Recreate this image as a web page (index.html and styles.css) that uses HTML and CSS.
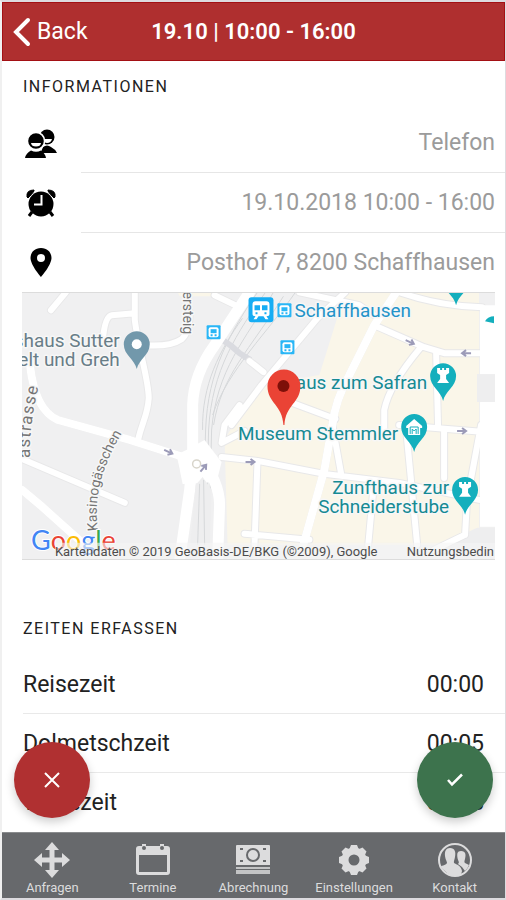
FILE: index.html
```html
<!DOCTYPE html>
<html lang="de">
<head>
    <meta charset="UTF-8">
    <meta name="viewport" content="width=device-width, initial-scale=1.0">
    <title>Termin 19.10</title>
    <link rel="stylesheet" href="styles.css">
</head>
<body>
    <div class="app">
        <header class="topbar">
            <button type="button" class="back">
                <svg width="18" height="30" viewBox="0 0 18 30" aria-hidden="true">
                    <path d="M15 3 L3 15 L15 27" fill="none" stroke="#fff" stroke-width="4" stroke-linecap="round"/>
                </svg>
                Back
            </button>
            <h1>19.10 | 10:00 - 16:00</h1>
        </header>

        <main>
            <div class="scroll">
                <section>
                    <h2>Informationen</h2>
                    <ul class="info">
                        <li>
                            <svg width="36" height="36" viewBox="0 0 36 36" aria-hidden="true">
                                <circle cx="24" cy="12" r="7.5"/>
                                <path d="M18 27 L20 22 Q24 19 28 22 Q32 24 34 28 H19z"/>
                                <path d="M20 14 H29 Q28 18 24 18 Q21 18 20 14z" fill="#fff"/>
                                <circle cx="13" cy="16" r="8.6" stroke="#fff" stroke-width="1.6"/>
                                <path d="M2 33 Q3 28 8 25.500 Q13 28 18 25.500 Q22 28 23 33z"/>
                                <path d="M8 18 H18 Q17.500 21.500 13 21.500 Q8.500 21.500 8 18z" fill="#fff"/>
                            </svg>
                            <span>Telefon</span>
                        </li>
                        <li>
                            <svg width="36" height="36" viewBox="0 0 36 36" aria-hidden="true">
                                <circle cx="18" cy="19" r="12.500"/>
                                <path d="M4 12 Q3 5 11 5 Q12 6 5 13z M32 12 Q33 5 25 5 Q24 6 31 13z" stroke="#000"/>
                                <path d="M9 27 L6 31 M27 27 L30 31" stroke="#000" stroke-width="3"/>
                                <path d="M18.500 10 V19.500 H11" fill="none" stroke="#fff" stroke-width="2"/>
                            </svg>
                            <span>19.10.2018 10:00 - 16:00</span>
                        </li>
                        <li>
                            <svg width="36" height="36" viewBox="0 0 36 36" aria-hidden="true">
                                <path fill-rule="evenodd" d="M18 3 C11 3 7.500 8 7.500 13 C7.500 20 18 32 18 32 C18 32 28.500 20 28.500 13 C28.500 8 25 3 18 3z M18 9 A4 4 0 1 1 18 17 A4 4 0 1 1 18 9z"/>
                            </svg>
                            <span>Posthof 7, 8200 Schaffhausen</span>
                        </li>
                    </ul>

                    <svg class="map" viewBox="22 292 474 268" preserveAspectRatio="xMidYMid slice" role="img" aria-label="Karte">
                        <defs>
                            <path id="kasino" d="M98 531 C95 500 97 475 125 428"/>
                            <path id="strasse" d="M30 458 C29 430 34 405 43 366"/>
                            <g id="pin">
                                <path d="M0 30 C-2 20 -13 16 -13 5 A13 13 0 0 1 13 5 C13 16 2 20 0 30z"/>
                            </g>
                            <g id="tower">
                                <path fill="#fff" d="M-6 -3 V2 L-3 4 V8 L-6 12 H6 L3 8 V4 L6 2 V-3 H3 V-1 H1 V-3 H-1 V-1 H-3 V-3z"/>
                            </g>
                            <g id="train">
                                <rect x="-7" y="-7" width="14" height="14" rx="1" fill="#29b6f6"/>
                                <rect x="-5" y="-5" width="10" height="10" rx="2" fill="#fff"/>
                                <rect x="-3" y="-3" width="6" height="4" fill="#29b6f6"/>
                                <path d="M-3 3 H-1 M1 3 H3" stroke="#29b6f6" stroke-width="2"/>
                            </g>
                            <g id="arrow">
                                <path d="M-5 0 H4 M0 -3 L4 0 L0 3" fill="none" stroke="#9c9bb8" stroke-width="2"/>
                            </g>
                        </defs>
                        <rect x="22" y="292" width="474" height="268" fill="#f0f0f1"/>
                        <!-- old town -->
                        <path class="town" d="M346 292 H480 V545 H228 L225 440 L252 393 L262 385 L320 375 L334 330z M178 292 H220 L218 296 H180z"/>
                        <path d="M478 374 H496 V402 H478z M440 546 L478 528 H496 V560 H430z" fill="#eeeeef"/>

                        <!-- railway -->
                        <path class="rail" d="M258 292 C232 330 208 370 206 430 L202 560 M266 292 C238 332 212 370 209 430 L206 560 M274 292 C245 340 217 370 212 430 L209 560 M284 296 C250 350 222 375 214 425 M243 318 C220 350 202 385 203 430 M296 292 C270 330 228 370 213 415"/>
                        <path d="M222 339 L232 346 L240 353 L251 360" fill="none" stroke="#dadbe0" stroke-width="6"/>

                        <!-- streets -->
                        <g class="casing">
                            <path id="lanes" d="M66 292 L51 310 M135 292 V320 C139 350 149 380 149 398 C148 415 143 420 138 441 M135 313 L112 315 Q105 316 103 340 M145 345 Q170 347 182 339 Q190 332 190 312 M22 459 L125 503 M232 425 L262 385 L318 318 L346 292 M250 361 L264 372 M215 295 L240 307 M300 292 L360 305 L375 315 M400 292 Q440 306 483 307 M377 326 L425 347 L445 353 H484 M421 348 Q390 385 385 410 V430 M437 353 L439 428 M285 400 L336 419 M222 457 L258 461 L325 474 L400 483 L480 500 M258 461 L255 545 M333 425 L342 475 M375 480 L369 545 M407 430 L418 545 M445 430 V478 M400 425 L485 432 M482 425 L468 500 L466 535 M245 534 L310 540 M435 550 L466 535 M245 431 L222 443 L225 425 L240 405"/>
                            <path id="roads" d="M30 365 Q35 410 58 420 L130 440 L190 459 M22 490 L40 505 L88 548 M397 292 L375 325 L350 375 Q336 400 333 425 L325 470 L304 545"/>
                            <path id="mains" d="M250 292 L215 345 Q194 374 193 405 V455 L190 490 L180 560 M199 455 Q220 482 220 505 L218 560"/>
                            <circle cx="196" cy="464" r="13"/>
                        </g>
                        <use href="#lanes" class="lane"/>
                        <use href="#roads" class="road"/>
                        <use href="#mains" class="highway"/>
                        <path d="M177 455 L205 440 L222 462 L217 482 L183 484z" fill="#fff"/>
                        <path d="M196 485 L203 477 L212 490 L210 560 H189z" fill="#eeeeef"/>
                        <path class="rail" d="M200 484 L198 545 M204 480 L205 545"/>
                        <circle cx="197" cy="464" r="4" fill="#fff" stroke="#d8d5cb" stroke-width="1.5"/>
                        <rect x="481" y="305" width="15" height="69" fill="#fff"/>
                        <rect x="481" y="402" width="15" height="125" fill="#fff"/>

                        <use href="#arrow" transform="translate(169 452) rotate(25)"/>
                        <use href="#arrow" transform="translate(204 468) rotate(-50)"/>
                        <use href="#arrow" transform="translate(251 462)"/>
                        <use href="#arrow" transform="translate(411 342) rotate(25)"/>
                        <use href="#arrow" transform="translate(467 353) rotate(180)"/>
                        <use href="#arrow" transform="translate(463 431)"/>

                        <text class="street"><textPath href="#kasino">Kasinogässchen</textPath></text>
                        <text class="street wide"><textPath href="#strasse">astrasse</textPath></text>
                        <text class="street" transform="translate(183 334) rotate(-270)" text-anchor="end">ckersteig</text>

                        <!-- places -->
                        <text class="place" x="120" y="347" text-anchor="end">shaus Sutter</text>
                        <text class="place" x="120" y="366" text-anchor="end">elt und Greh</text>
                        <use href="#pin" x="137" y="339" fill="#7298ab"/>
                        <circle cx="137" cy="344" r="5" fill="#fff"/>

                        <use href="#train" transform="translate(214 332)"/>
                        <use href="#train" transform="translate(285 310)"/>
                        <use href="#train" transform="translate(288 347)"/>
                        <rect x="249" y="297" width="25" height="25" rx="3" fill="#16adf4"/>
                        <path d="M256 301 H267 Q270 301 270 304 V314 Q270 316 267 316 L269 319 H266 L264 316 H259 L257 319 H254 L256 316 Q253 316 253 314 V304 Q253 301 256 301z" fill="#fff"/>
                        <path d="M255 305 H260.500 V310 H255z M262.500 305 H268 V310 H262.500z M256 312 H258 V314 H256z M265 312 H267 V314 H265z" fill="#16adf4"/>
                        <text class="place station" x="295" y="317">Schaffhausen</text>

                        <text class="place sight" x="428" y="389" text-anchor="end">Haus zum Safran</text>
                        <text class="place sight" x="399" y="440" text-anchor="end">Museum Stemmler</text>
                        <text class="place sight" x="450" y="494" text-anchor="end">Zunfthaus zur</text>
                        <text class="place sight" x="450" y="513" text-anchor="end">Schneiderstube</text>
                        <g fill="#14afbd">
                            <use href="#pin" x="444" y="371"/>
                            <use href="#pin" x="415" y="422"/>
                            <use href="#pin" x="466" y="485"/>
                            <use href="#pin" x="457" y="275"/>
                            <path d="M486 321 Q489 316 495 316 V323z"/>
                        </g>
                        <use href="#tower" x="444" y="371"/>
                        <use href="#tower" x="466" y="485"/>
                        <path d="M407 426 L415 419 L423 426 V428 H421 V435 H409 V428 H407z" fill="#fff"/>
                        <path d="M411 434 V427 H419 V434 M413 434 V429 L415 431 L417 429 V434" fill="none" stroke="#14afbd"/>

                        <path d="M284 425 C283 405 268 403 268 386 A16.500 16.500 0 0 1 301 386 C301 403 286 405 285 425z" fill="#ea4335"/>
                        <circle cx="284" cy="386" r="6" fill="#7d1009"/>

                        <text class="google" x="31" y="550"><tspan fill="#4285f4">G</tspan><tspan fill="#ea4335">o</tspan><tspan fill="#fbbc05">o</tspan><tspan fill="#4285f4">g</tspan><tspan fill="#34a853">l</tspan><tspan fill="#ea4335">e</tspan></text>
                        <rect x="55" y="543" width="441" height="17" fill="#f5f5f5" fill-opacity="0.6"/>
                        <text class="credit" x="55" y="556">Kartendaten © 2019 GeoBasis-DE/BKG (©2009), Google</text>
                        <text class="credit" x="495" y="556" text-anchor="end">Nutzungsbedin</text>
                    </svg>
                </section>

                <section class="times">
                    <h2>Zeiten erfassen</h2>
                    <ul>
                        <li><span>Reisezeit</span><time>00:00</time></li>
                        <li><span>Dolmetschzeit</span><time>00:05</time></li>
                        <li><span>Wegezeit</span><time>00:05</time></li>
                    </ul>
                </section>
            </div>

            <button type="button" class="fab cancel" aria-label="Abbrechen">
                <svg width="16" height="16" viewBox="0 0 16 16">
                    <path d="M1 1 L15 15 M15 1 L1 15" stroke="#fff" stroke-width="2"/>
                </svg>
            </button>
            <button type="button" class="fab confirm" aria-label="Speichern">
                <svg width="16" height="16" viewBox="0 0 16 16">
                    <path d="M1 8 L5 12.500 L15 2.500" fill="none" stroke="#fff" stroke-width="2.500"/>
                </svg>
            </button>
        </main>

        <nav class="tabs">
            <a href="#anfragen">
                <svg width="36" height="36" viewBox="0 0 36 36" aria-hidden="true">
                    <path d="M18 0 L25 8 H20.500 V15.500 H28 V11 L36 18 L28 25 V20.500 H20.500 V28 H25 L18 36 L11 28 H15.500 V20.500 H8 V25 L0 18 L8 11 V15.500 H15.500 V8 H11z"/>
                </svg>
                Anfragen
            </a>
            <a href="#termine">
                <svg width="36" height="36" viewBox="0 0 36 36" aria-hidden="true">
                    <path fill-rule="evenodd" d="M4 4 H7 V2 H11 V4 H25 V2 H29 V4 H32 Q35 4 35 7 V30 Q35 33 32 33 H4 Q1 33 1 30 V7 Q1 4 4 4z M4 13 V30 H32 V13z"/>
                    <circle cx="9" cy="6" r="2" fill="#67696c"/>
                    <circle cx="27" cy="6" r="2" fill="#67696c"/>
                </svg>
                Termine
            </a>
            <a href="#abrechnung">
                <svg width="36" height="36" viewBox="0 0 36 36" aria-hidden="true">
                    <path d="M2 3 H34 Q35 3 35 4 V23 H1 V4 Q1 3 2 3z"/>
                    <path d="M1 25 H35 V27 H1z M1 28 H35 V32 H1z" fill="#c3c4c5"/>
                    <circle cx="18" cy="13" r="6" fill="none" stroke="#67696c" stroke-width="2"/>
                    <path d="M5 6 H8 V8 H5z M28 6 H31 V8 H28z M5 18 H8 V20 H5z M28 18 H31 V20 H28z" fill="#67696c"/>
                </svg>
                Abrechnung
            </a>
            <a href="#einstellungen">
                <svg width="36" height="36" viewBox="0 0 36 36" aria-hidden="true">
                    <circle cx="18" cy="18" r="9" fill="none" stroke="#dcdcdd" stroke-width="7"/>
                    <path d="M15 3 H21 L23 8 H13z M15 33 H21 L23 28 H13z M3 15 V21 L8 23 V13z M33 15 V21 L28 23 V13z M5.500 9.500 L9.500 5.500 L14 7.500 L7.500 14z M30.500 9.500 L26.500 5.500 L22 7.500 L28.500 14z M5.500 26.500 L9.500 30.500 L14 28.500 L7.500 22z M30.500 26.500 L26.500 30.500 L22 28.500 L28.500 22z"/>
                </svg>
                Einstellungen
            </a>
            <a href="#kontakt">
                <svg width="36" height="36" viewBox="0 0 36 36" aria-hidden="true">
                    <circle cx="18" cy="18" r="16" fill="none" stroke="#dcdcdd" stroke-width="2"/>
                    <path d="M13 6 C18 6 19 10 18 15 C17.500 18 16.500 19 17 21 C21 23 24 24 25 29 L24 33 Q14 36 8 29 Q4 26 4 24 Q9 23 10 21 C10 19 8.500 18 8 14 C7.500 9 9 6 13 6z"/>
                    <path d="M24 9 C29 9 29 13 28 17 C27.500 19 27 20 28 21 L32 23 Q31 26 28 29 L25 25 L21 22 C23 20 21 19 20.500 16 C20 12 20 9 24 9z"/>
                </svg>
                Kontakt
            </a>
        </nav>
    </div>
</body>
</html>
```
FILE: styles.css
```css
* {
    box-sizing: border-box;
}

body {
    margin: 0;
    font-family: Roboto, 'Liberation Sans', sans-serif;
    font-size: 23px;
    color: #222;
    background-color: #fff;
}

h1,
h2,
ul {
    margin: 0;
    padding: 0;
}

.app {
    display: flex;
    flex-direction: column;
    height: 100vh;
    border: 2px solid #dddbdf;
    border-left-color: #f0f0f0;
    border-right-width: 1px;
}

/* top bar */
.topbar {
    display: grid;
    grid-template-columns: 1fr auto 1fr;
    align-items: center;
    flex: none;
    height: 59px;
    padding: 0 10px;
    color: #fff;
    background-color: #af2f2f;
    border: 1px solid #a31014;
}

.back {
    display: flex;
    align-items: center;
    gap: 6px;
    justify-self: start;
    padding: 0;
    border: 0;
    background: none;
    color: inherit;
    font-family: inherit;
    font-size: 23px;
}

h1 {
    font-size: 22px;
    font-weight: 600;
}

/* content */
main {
    position: relative;
    flex: 1;
    min-height: 0;
}

.scroll {
    height: 100%;
    overflow-y: auto;
    scrollbar-width: none;
}

h2 {
    padding-left: 21px;
    font-size: 16px;
    font-weight: 400;
    line-height: 52px;
    letter-spacing: 1.5px;
    text-transform: uppercase;
}

li {
    display: flex;
    align-items: center;
}

.info li {
    height: 60px;
    padding-left: 21px;
}

.info li:last-child {
    height: 59px;
}

.info li svg {
    flex: none;
}

.info span {
    flex: 1;
    margin-left: 22px;
    padding-right: 10px;
    line-height: 59px;
    text-align: right;
    color: #9b9b9b;
    border-bottom: 1px solid #e6e6e6;
}

.info li:last-child span {
    border-bottom: 0;
}

.times {
    margin-top: 43px;
}

.times li {
    justify-content: space-between;
    height: 59px;
    margin-left: 21px;
    padding-right: 21px;
    border-bottom: 1px solid #e9e9e9;
}

.times li:last-child {
    border-bottom: 0;
}

/* map */
.map {
    display: block;
    width: calc(100% - 30px);
    height: 268px;
    margin-left: 20px;
    border-top: 1px solid #dcdcdc;
    border-bottom: 1px solid #dcdcdc;
}

.town {
    fill: #faf6e9;
}

.rail {
    fill: none;
    stroke: #d6d8da;
    stroke-width: 1;
}

.casing,
.lane,
.road,
.highway {
    fill: none;
    stroke: #fff;
    stroke-width: 6px;
    stroke-linecap: round;
    stroke-linejoin: round;
}

.casing {
    stroke: #e8e8e9;
    stroke-width: 8px;
}

.road {
    stroke-width: 8px;
}

.highway {
    stroke-width: 11px;
}

.place,
.street {
    font-size: 19px;
    fill: #687d87;
    stroke: #f7f7f7;
    stroke-width: 3px;
    stroke-linejoin: round;
    paint-order: stroke;
}

.station {
    fill: #2493c8;
}

.sight {
    fill: #168a93;
}

.street {
    font-size: 14px;
    fill: #757575;
}

.wide {
    font-size: 17px;
    letter-spacing: 1px;
}

.google {
    font-family: Lato, sans-serif;
    font-size: 27px;
    stroke: #fff;
    stroke-width: 2px;
    paint-order: stroke;
}

.credit {
    font-size: 13px;
    fill: #4c4c4c;
}

/* floating buttons */
.fab {
    position: absolute;
    bottom: 14px;
    display: flex;
    align-items: center;
    justify-content: center;
    width: 76px;
    height: 76px;
    padding: 0;
    border: 0;
    border-radius: 50%;
    box-shadow: 0 4px 10px rgba(0, 0, 0, 0.2);
}

.cancel {
    left: 12px;
    background-color: #b03031;
}

.confirm {
    right: 12px;
    background-color: #3d734d;
}

/* bottom tabs */
.tabs {
    display: grid;
    grid-template-columns: repeat(5, 1fr);
    flex: none;
    height: 66px;
    background-color: #67696c;
    border-top: 1px solid #8a8c8e;
}

.tabs a {
    display: flex;
    flex-direction: column;
    align-items: center;
    padding-top: 9px;
    font-size: 13px;
    line-height: 20px;
    color: #dcdcdd;
    text-decoration: none;
}

.tabs svg {
    fill: #dcdcdd;
}
```
